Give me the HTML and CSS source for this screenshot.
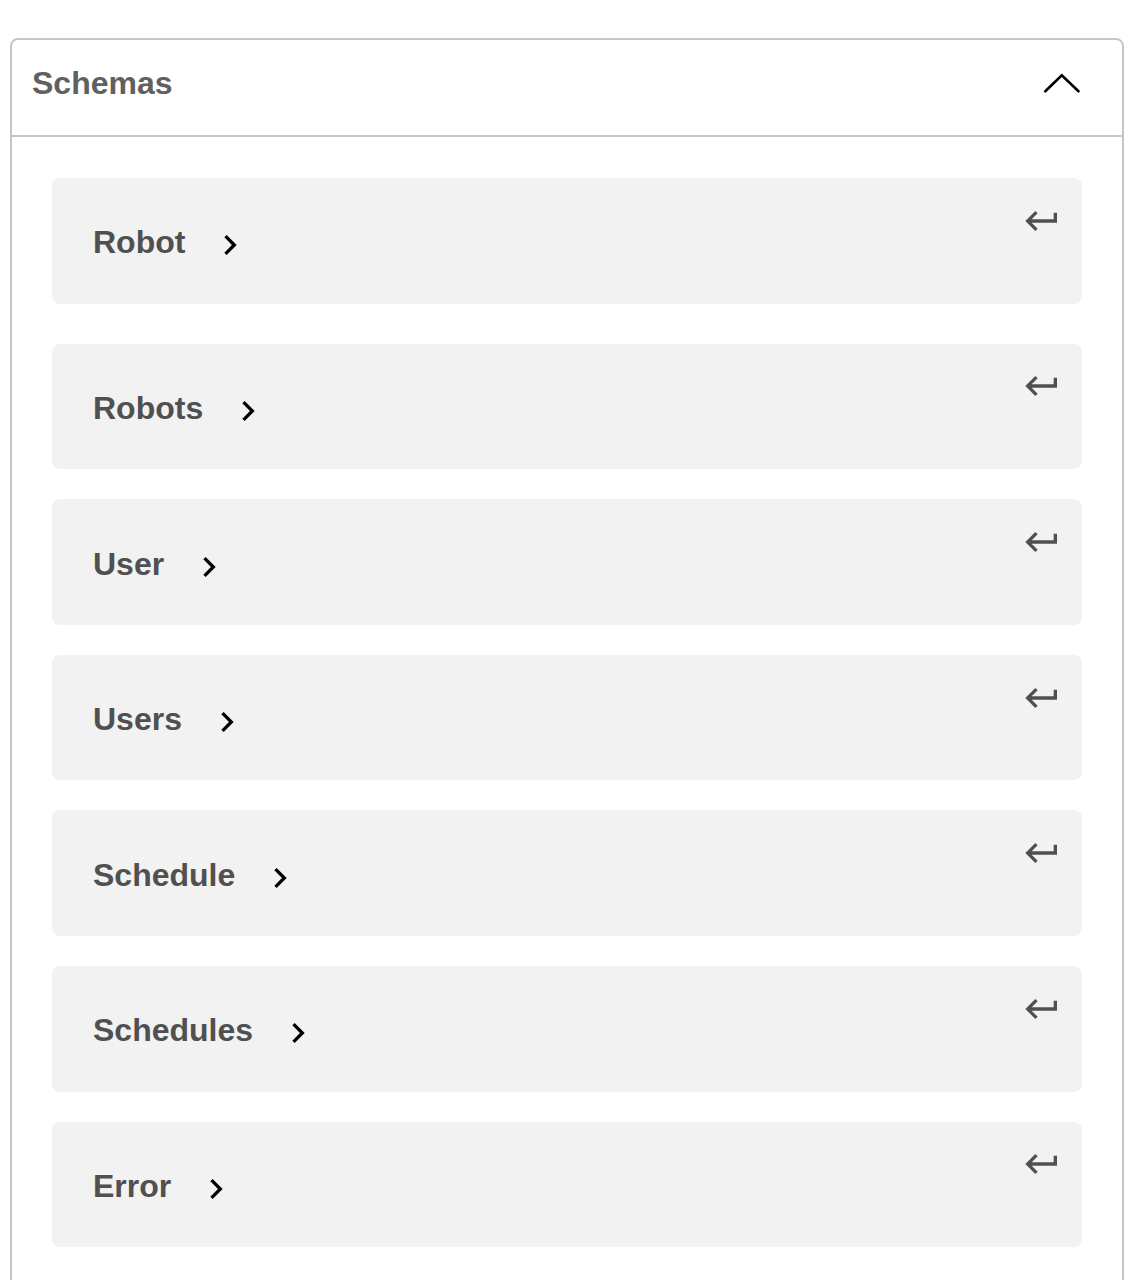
FILE: index.html
```html
<!DOCTYPE html>
<html lang="en">
<head>
<meta charset="utf-8">
<title>Schemas</title>
<link rel="stylesheet" href="styles.css">
</head>
<body>
<section class="models">
  <h4 class="models-head">
    <span class="models-title">Schemas</span>
    <svg class="head-arrow" width="40" height="40" viewBox="0 0 40 40" aria-hidden="true"><polyline points="3.3,27.3 19.8,11.3 36.5,27.3" fill="none" stroke="#000" stroke-width="2.6" stroke-linecap="round" stroke-linejoin="miter"/></svg>
  </h4>
  <div class="model-list">
    <div class="model-box"><span class="model-title">Robot</span><svg class="toggle" width="40" height="40" viewBox="0 0 24 24" aria-hidden="true"><path d="M10 6L8.59 7.41 13.17 12l-4.58 4.59L10 18l6-6z"/></svg><svg class="jump" width="40" height="40" viewBox="0 0 24 24" aria-hidden="true"><path d="M19 7v4H5.83l3.58-3.59L8 6l-6 6 6 6 1.41-1.41L5.83 13H21V7z"/></svg></div>
    <div class="model-box"><span class="model-title">Robots</span><svg class="toggle" width="40" height="40" viewBox="0 0 24 24" aria-hidden="true"><path d="M10 6L8.59 7.41 13.17 12l-4.58 4.59L10 18l6-6z"/></svg><svg class="jump" width="40" height="40" viewBox="0 0 24 24" aria-hidden="true"><path d="M19 7v4H5.83l3.58-3.59L8 6l-6 6 6 6 1.41-1.41L5.83 13H21V7z"/></svg></div>
    <div class="model-box"><span class="model-title">User</span><svg class="toggle" width="40" height="40" viewBox="0 0 24 24" aria-hidden="true"><path d="M10 6L8.59 7.41 13.17 12l-4.58 4.59L10 18l6-6z"/></svg><svg class="jump" width="40" height="40" viewBox="0 0 24 24" aria-hidden="true"><path d="M19 7v4H5.83l3.58-3.59L8 6l-6 6 6 6 1.41-1.41L5.83 13H21V7z"/></svg></div>
    <div class="model-box"><span class="model-title">Users</span><svg class="toggle" width="40" height="40" viewBox="0 0 24 24" aria-hidden="true"><path d="M10 6L8.59 7.41 13.17 12l-4.58 4.59L10 18l6-6z"/></svg><svg class="jump" width="40" height="40" viewBox="0 0 24 24" aria-hidden="true"><path d="M19 7v4H5.83l3.58-3.59L8 6l-6 6 6 6 1.41-1.41L5.83 13H21V7z"/></svg></div>
    <div class="model-box"><span class="model-title">Schedule</span><svg class="toggle" width="40" height="40" viewBox="0 0 24 24" aria-hidden="true"><path d="M10 6L8.59 7.41 13.17 12l-4.58 4.59L10 18l6-6z"/></svg><svg class="jump" width="40" height="40" viewBox="0 0 24 24" aria-hidden="true"><path d="M19 7v4H5.83l3.58-3.59L8 6l-6 6 6 6 1.41-1.41L5.83 13H21V7z"/></svg></div>
    <div class="model-box"><span class="model-title">Schedules</span><svg class="toggle" width="40" height="40" viewBox="0 0 24 24" aria-hidden="true"><path d="M10 6L8.59 7.41 13.17 12l-4.58 4.59L10 18l6-6z"/></svg><svg class="jump" width="40" height="40" viewBox="0 0 24 24" aria-hidden="true"><path d="M19 7v4H5.83l3.58-3.59L8 6l-6 6 6 6 1.41-1.41L5.83 13H21V7z"/></svg></div>
    <div class="model-box"><span class="model-title">Error</span><svg class="toggle" width="40" height="40" viewBox="0 0 24 24" aria-hidden="true"><path d="M10 6L8.59 7.41 13.17 12l-4.58 4.59L10 18l6-6z"/></svg><svg class="jump" width="40" height="40" viewBox="0 0 24 24" aria-hidden="true"><path d="M19 7v4H5.83l3.58-3.59L8 6l-6 6 6 6 1.41-1.41L5.83 13H21V7z"/></svg></div>
  </div>
</section>
</body>
</html>
```

FILE: styles.css
```css
html, body {
  margin: 0;
  padding: 0;
  background: #fff;
}

body {
  font-family: "Liberation Sans", Arial, Helvetica, sans-serif;
  overflow: hidden;
}

.models {
  margin: 38px 22px 0 10px;
  border: 2px solid rgb(196, 198, 203);
  border-radius: 8px;
  min-height: 1400px;
}

.models-head {
  display: flex;
  justify-content: space-between;
  align-items: flex-start;
  height: 95px;
  margin: 0;
  padding: 0 40px 0 20px;
  border-bottom: 2px solid rgb(196, 198, 203);
  font-size: 32px;
  font-weight: bold;
  color: #606060;
}

.models-title {
  padding-top: 25px;
  line-height: 36px;
}

.head-arrow {
  margin-top: 24px;
  display: block;
}

.model-list {
  display: flex;
  flex-direction: column;
  padding: 41px 40px 0;
  gap: 30px;
}

.model-box {
  position: relative;
  box-sizing: border-box;
  height: 125.6px;
  padding: 46.4px 0 0 41px;
  background: #f2f2f2;
  border-radius: 8px;
  line-height: 36px;
  font-size: 32px;
  font-weight: bold;
  color: #505050;
}

.model-box:first-child {
  margin-bottom: 10px;
}

.toggle {
  vertical-align: -12px;
  margin-left: 25px;
  fill: #000;
}

.jump {
  position: absolute;
  top: 22.8px;
  right: 20px;
  fill: #505050;
}
```
